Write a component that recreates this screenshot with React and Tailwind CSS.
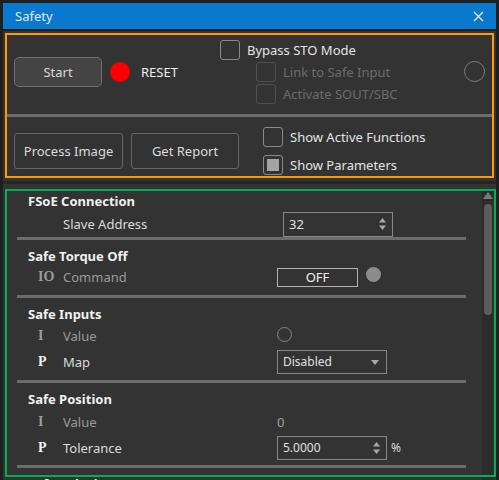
import React from 'react';

const Check = ({ disabled, checked }) => (
  <div className={`w-[20px] h-[20px] rounded-[3px] border-[1.5px] flex items-center justify-center shrink-0 ${disabled ? 'border-[#505050]' : 'border-[#8a8a8a]'}`}>
    {checked && <div className="w-[12px] h-[12px] bg-[#a4a4a4]" />}
  </div>
);

const SpinArrows = () => (
  <svg width="9" height="14" viewBox="0 0 9 14" className="shrink-0">
    <path d="M4.5 1 L8 5.5 H1 Z" fill="#a8a8a8" />
    <path d="M4.5 13 L8 8.5 H1 Z" fill="#a8a8a8" />
  </svg>
);

const Sep = () => <div className="ml-[14px] w-[449px] h-[3px] bg-[#6c6c6c]" />;

const Heading = ({ children }) => (
  <div className="h-[22px] pl-[25px] flex items-center font-bold text-[#f0f0f0]">{children}</div>
);

const Row = ({ kind, label, h, children }) => (
  <div className={`flex items-center ${h}`}>
    <div className={`w-[25px] ml-[35px] shrink-0 font-['Liberation_Serif',serif] font-bold text-[14px] ${kind === 'P' ? 'text-[#f2f2f2]' : 'text-[#9c9c9c]'}`}>{kind}</div>
    <div className={`w-[214px] shrink-0 ${kind === 'P' || kind === '' ? 'text-[#dcdcdc]' : 'text-[#9a9a9a]'}`}>{label}</div>
    {children}
  </div>
);

export default function App() {
  return (
    <div className="w-[499px] h-[480px] bg-[#1f1f1f] px-[3px] pt-[3px] flex flex-col overflow-hidden font-['Noto_Sans',sans-serif] text-[13px] leading-none">
      {/* Title */}
      <div className="h-[26px] bg-[#0a78cc] flex items-center justify-between pl-[12px] pr-[12px] shrink-0">
        <span className="text-[#e2eaf2] text-[13px]">Safety</span>
        <svg width="11" height="11" viewBox="0 0 11 11">
          <path d="M1 1 L10 10 M10 1 L1 10" stroke="#dfe8f0" strokeWidth="1.4" />
        </svg>
      </div>
      <div className="h-[2px] shrink-0" />

      {/* Top panel */}
      <div className="h-[150px] bg-[#333333] pt-[2px] px-[2px] shrink-0">
        <div className="h-[145px] border-2 border-[#ff9a00] flex flex-col">
          <div className="h-[79px] flex">
            <div className="w-[213px] flex items-center pl-[7px] pb-[5px]">
              <button className="w-[88px] h-[30px] rounded-[5px] bg-[#444444] border border-[#6e6e6e] text-[#dadada]">Start</button>
              <div className="w-[20px] h-[20px] rounded-full bg-[#ff0000] ml-[8px]" />
              <span className="ml-[11px] text-[#eeeeee]">RESET</span>
            </div>
            <div className="pt-[5px] flex flex-col gap-[2px]">
              <div className="h-[20px] flex items-center gap-[7px]">
                <Check />
                <span className="text-[#e4e4e4]">Bypass STO Mode</span>
              </div>
              <div className="h-[20px] flex items-center gap-[7px] ml-[36px]">
                <Check disabled />
                <span className="text-[#6c6c6c]">Link to Safe Input</span>
              </div>
              <div className="h-[20px] flex items-center gap-[7px] ml-[36px]">
                <Check disabled />
                <span className="text-[#6c6c6c]">Activate SOUT/SBC</span>
              </div>
            </div>
            <div className="ml-auto mr-[7px] mt-[26px] w-[21px] h-[21px] rounded-full border-[1.5px] border-[#7c7c7c]" />
          </div>
          <div className="h-[3px] bg-[#6c6c6c]" />
          <div className="flex-1 flex">
            <div className="flex items-start pt-[16px] pl-[7px] gap-[8px]">
              <button className="w-[109px] h-[36px] rounded-[3px] border border-[#666666] text-[#dcdcdc]">Process Image</button>
              <button className="w-[108px] h-[36px] rounded-[3px] border border-[#666666] text-[#dcdcdc]">Get Report</button>
            </div>
            <div className="ml-[24px] pt-[10px] flex flex-col gap-[8px]">
              <div className="h-[20px] flex items-center gap-[7px]">
                <Check />
                <span className="text-[#e4e4e4]">Show Active Functions</span>
              </div>
              <div className="h-[20px] flex items-center gap-[7px]">
                <Check checked />
                <span className="text-[#e4e4e4]">Show Parameters</span>
              </div>
            </div>
          </div>
        </div>
      </div>

      <div className="h-[3px] bg-[#262626] shrink-0" />

      {/* List panel */}
      <div className="flex-1 bg-[#333333] relative flex overflow-hidden">
        <div className="flex-1">
          <div className="pt-[6px]">
            <Heading>FSoE Connection</Heading>
            <Row kind="" label="Slave Address" h="h-[24px]">
              <div className="ml-[6px] w-[110px] h-[25px] border border-[#888888] flex items-center justify-between pl-[5px] pr-[5px] text-[#e0e0e0]">
                <span>32</span>
                <SpinArrows />
              </div>
            </Row>
            <div className="h-[1px]" />
            <Sep />
          </div>

          <div className="pt-[5px]">
            <Heading>Safe Torque Off</Heading>
            <Row kind="IO" label="Command" h="h-[20px]">
              <div className="w-[81px] h-[19px] border border-[#b4b4b4] flex items-center justify-center text-[#f0f0f0]">OFF</div>
              <div className="ml-[8px] w-[15px] h-[15px] rounded-full bg-[#8c8c8c] -mt-[6px]" />
            </Row>
            <div className="h-[8px]" />
            <Sep />
          </div>

          <div className="pt-[5px]">
            <Heading>Safe Inputs</Heading>
            <Row kind="I" label="Value" h="h-[22px]">
              <div className="w-[15px] h-[15px] rounded-full border-[1.5px] border-[#868686] -mt-[4px]" />
            </Row>
            <Row kind="P" label="Map" h="h-[30px]">
              <div className="w-[110px] h-[24px] border border-[#888888] flex items-center justify-between pl-[5px] pr-[7px] text-[#e0e0e0] text-[12px]">
                <span>Disabled</span>
                <svg width="8" height="5" viewBox="0 0 8 5"><path d="M0 0 H8 L4 5 Z" fill="#a8a8a8" /></svg>
              </div>
            </Row>
            <div className="h-[3px]" />
            <Sep />
          </div>

          <div className="pt-[5px]">
            <Heading>Safe Position</Heading>
            <Row kind="I" label="Value" h="h-[24px]">
              <span className="text-[#a0a0a0]">0</span>
            </Row>
            <Row kind="P" label="Tolerance" h="h-[28px]">
              <div className="w-[110px] h-[24px] border border-[#888888] flex items-center justify-between pl-[5px] pr-[5px] text-[#e0e0e0] text-[12px]">
                <span>5.0000</span>
                <SpinArrows />
              </div>
              <span className="ml-[4px] text-[#dcdcdc] text-[12px]">%</span>
            </Row>
            <div className="h-[3px]" />
            <Sep />
          </div>

          <div className="pt-[5px]">
            <Heading>Safe Velocity</Heading>
          </div>
        </div>

        {/* Scrollbar */}
        <div className="w-[11px] mr-[3px] mt-[7px] bg-[#2c2c2c] flex flex-col items-center shrink-0">
          <svg width="10" height="7" viewBox="0 0 10 7" className="mt-[1px]"><path d="M5 0 L10 7 H0 Z" fill="#7a7a7a" /></svg>
          <div className="mt-[5px] w-[8px] h-[111px] rounded-[4px] bg-[#5c5c5c]" />
        </div>

        {/* Green highlight */}
        <div className="absolute left-[2px] top-[5px] right-0 bottom-[3px] border-2 border-[#00b050] pointer-events-none" />
      </div>
    </div>
  );
}
